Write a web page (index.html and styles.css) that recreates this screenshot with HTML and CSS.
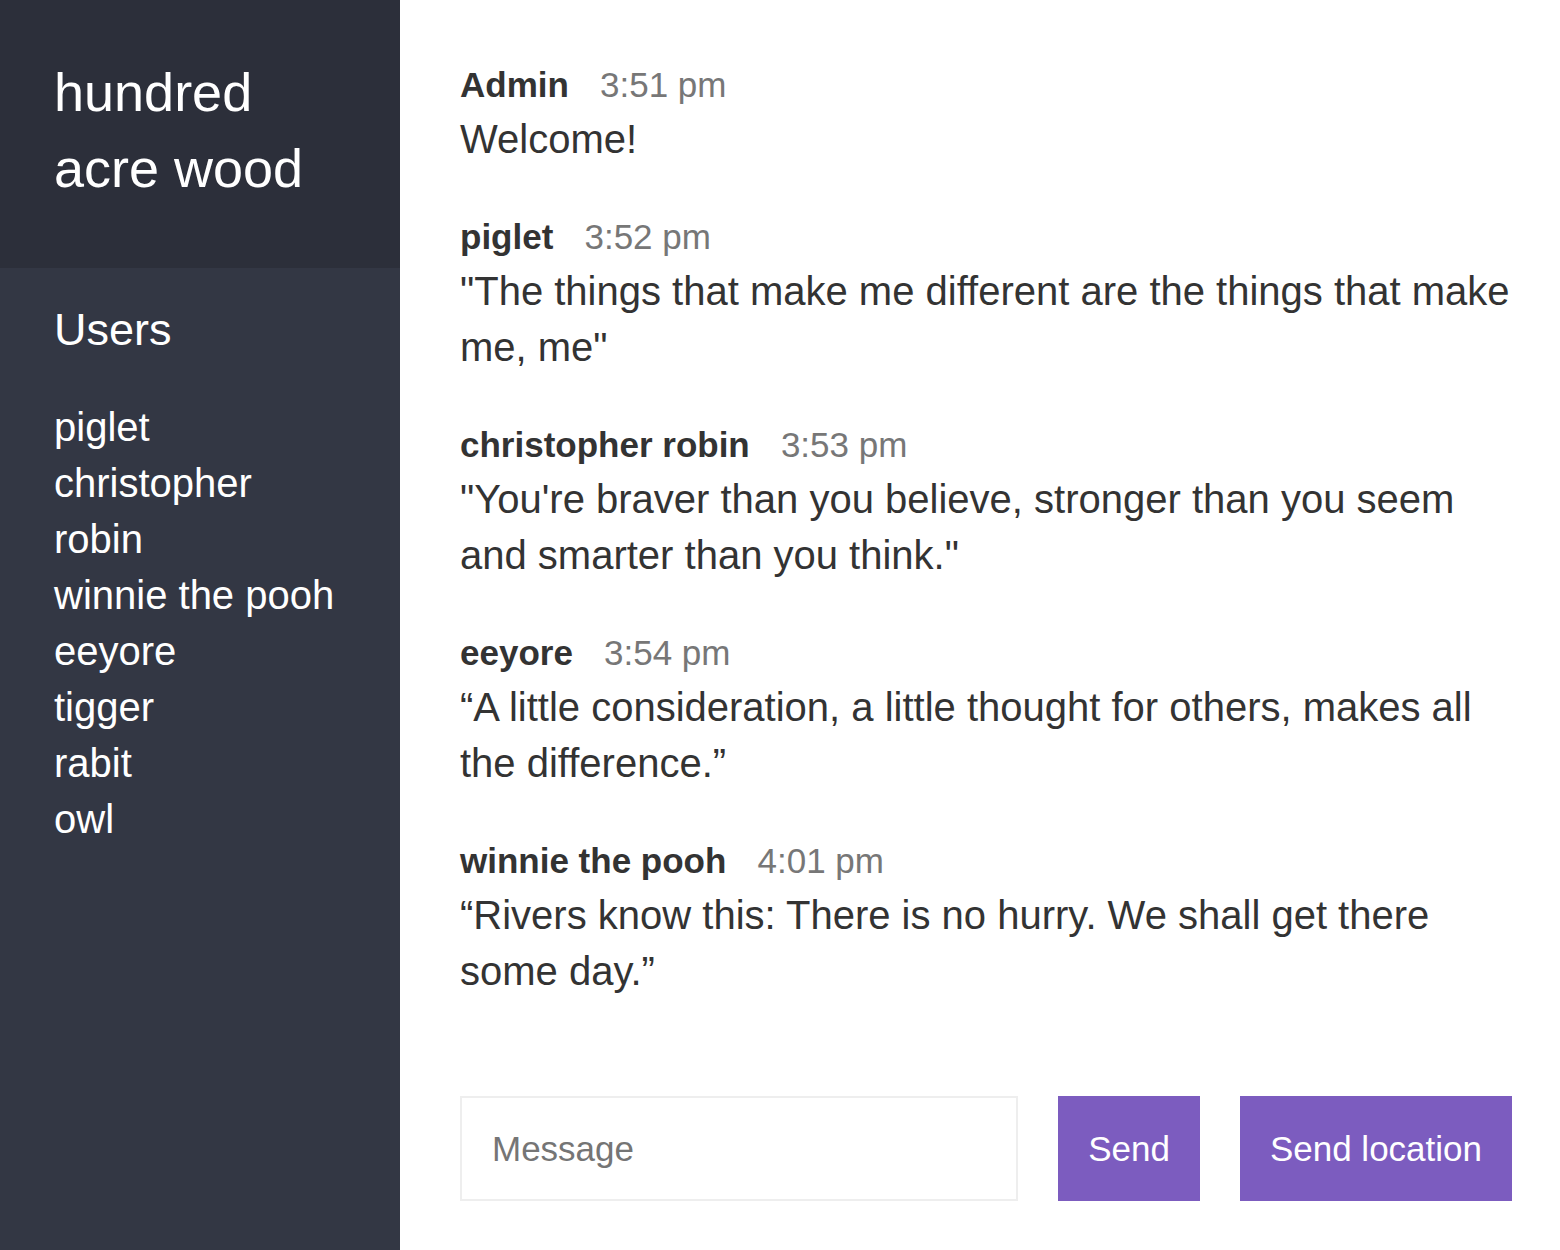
FILE: index.html
```html
<!DOCTYPE html>
<html lang="en">
<head>
<meta charset="utf-8">
<title>Chat</title>
<link rel="stylesheet" href="styles.css">
</head>
<body>
<div class="chat">
  <aside class="chat__sidebar">
    <h2 class="room-title">hundred acre wood</h2>
    <h3 class="list-title">Users</h3>
    <ul class="users">
      <li>piglet</li>
      <li>christopher robin</li>
      <li>winnie the pooh</li>
      <li>eeyore</li>
      <li>tigger</li>
      <li>rabit</li>
      <li>owl</li>
    </ul>
  </aside>
  <main class="chat__main">
    <div class="chat__messages">
      <div class="message">
        <p><span class="message__name">Admin</span> <span class="message__meta">3:51 pm</span></p>
        <p>Welcome!</p>
      </div>
      <div class="message">
        <p><span class="message__name">piglet</span> <span class="message__meta">3:52 pm</span></p>
        <p>"The things that make me different are the things that make me, me"</p>
      </div>
      <div class="message">
        <p><span class="message__name">christopher robin</span> <span class="message__meta">3:53 pm</span></p>
        <p>"You're braver than you believe, stronger than you seem and smarter than you think."</p>
      </div>
      <div class="message">
        <p><span class="message__name">eeyore</span> <span class="message__meta">3:54 pm</span></p>
        <p>“A little consideration, a little thought for others, makes all the difference.”</p>
      </div>
      <div class="message">
        <p><span class="message__name">winnie the pooh</span> <span class="message__meta">4:01 pm</span></p>
        <p>“Rivers know this: There is no hurry. We shall get there some day.”</p>
      </div>
    </div>
    <div class="compose">
      <form class="compose__form">
        <input class="compose__input" name="message" placeholder="Message" autocomplete="off">
        <button class="btn" type="button">Send</button>
      </form>
      <button class="btn" type="button">Send location</button>
    </div>
  </main>
</div>
</body>
</html>
```
FILE: styles.css
```css
* {
  margin: 0;
  padding: 0;
  box-sizing: border-box;
}

body {
  font-family: "Liberation Sans", Arial, Helvetica, sans-serif;
  font-size: 40px;
  line-height: 1.4;
  color: #333333;
  background: #ffffff;
}

.chat {
  display: flex;
  height: 1250px;
}

.chat__sidebar {
  width: 400px;
  flex-shrink: 0;
  height: 100%;
  background: #333744;
  color: #ffffff;
}

.room-title {
  font-weight: 400;
  font-size: 54px;
  line-height: 76px;
  background: #2c2f3a;
  padding: 54px 60px 62px 54px;
  height: 268px;
}

.list-title {
  font-weight: 400;
  font-size: 45px;
  line-height: 63px;
  padding: 30px 60px 0 54px;
  margin-bottom: 8px;
}

.users {
  list-style: none;
  font-weight: 400;
  font-size: 40px;
  line-height: 56px;
  padding: 30px 60px 0 54px;
}

.chat__main {
  flex-grow: 1;
  display: flex;
  flex-direction: column;
  height: 100%;
}

.chat__messages {
  flex-grow: 1;
  padding: 55px 40px 0 60px;
  overflow: hidden;
}

.message {
  margin-bottom: 40px;
}

.message__name {
  font-weight: 700;
  font-size: 35px;
  margin-right: 20px;
}

.message__meta {
  color: #777777;
  font-size: 35px;
}

.compose {
  display: flex;
  flex-shrink: 0;
  padding: 0 48px 49px 60px;
}

.compose__form {
  display: flex;
  flex-grow: 1;
  margin-right: 40px;
}

.compose__input {
  flex-grow: 1;
  height: 105px;
  border: 2px solid #eeeeee;
  padding: 0 30px;
  margin-right: 40px;
  font-family: "Liberation Sans", Arial, Helvetica, sans-serif;
  font-size: 35px;
  color: #333333;
  outline: none;
}

.compose__input::placeholder {
  color: #757575;
}

.btn {
  height: 105px;
  padding: 0 30px;
  background: #7c5cbf;
  border: none;
  color: #ffffff;
  font-family: "Liberation Sans", Arial, Helvetica, sans-serif;
  font-size: 35px;
  cursor: pointer;
}
```
